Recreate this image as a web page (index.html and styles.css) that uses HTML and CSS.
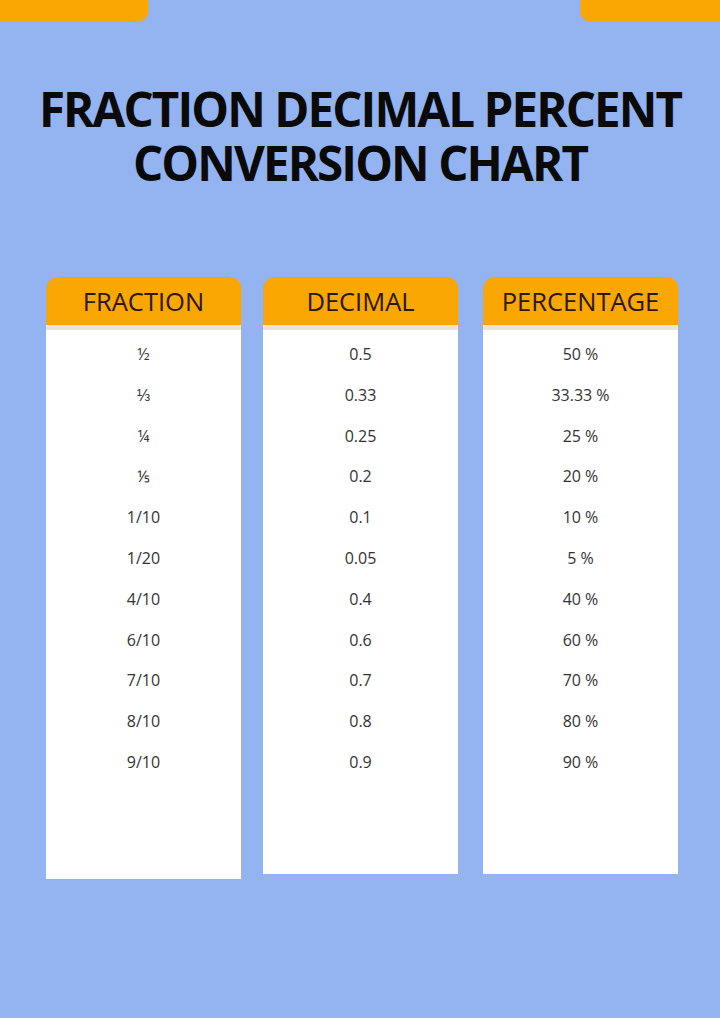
FILE: index.html
```html
<!DOCTYPE html>
<html>
<head>
<meta charset="utf-8">
<link rel="stylesheet" href="styles.css">
</head>
<body>
<div class="page">
  <div class="topbars">
    <div class="bar bar-left"></div>
    <div class="bar bar-right"></div>
  </div>
  <h1 class="title"><span class="line">FRACTION DECIMAL PERCENT</span><span class="line">CONVERSION CHART</span></h1>
  <div class="columns">
    <div class="col col1">
      <div class="head">FRACTION</div>
      <div class="body">
        <div class="row">½</div>
        <div class="row">⅓</div>
        <div class="row">¼</div>
        <div class="row">⅕</div>
        <div class="row">1/10</div>
        <div class="row">1/20</div>
        <div class="row">4/10</div>
        <div class="row">6/10</div>
        <div class="row">7/10</div>
        <div class="row">8/10</div>
        <div class="row">9/10</div>
      </div>
    </div>
    <div class="col col2">
      <div class="head">DECIMAL</div>
      <div class="body">
        <div class="row">0.5</div>
        <div class="row">0.33</div>
        <div class="row">0.25</div>
        <div class="row">0.2</div>
        <div class="row">0.1</div>
        <div class="row">0.05</div>
        <div class="row">0.4</div>
        <div class="row">0.6</div>
        <div class="row">0.7</div>
        <div class="row">0.8</div>
        <div class="row">0.9</div>
      </div>
    </div>
    <div class="col col3">
      <div class="head">PERCENTAGE</div>
      <div class="body">
        <div class="row">50 %</div>
        <div class="row">33.33 %</div>
        <div class="row">25 %</div>
        <div class="row">20 %</div>
        <div class="row">10 %</div>
        <div class="row">5 %</div>
        <div class="row">40 %</div>
        <div class="row">60 %</div>
        <div class="row">70 %</div>
        <div class="row">80 %</div>
        <div class="row">90 %</div>
      </div>
    </div>
  </div>
</div>
</body>
</html>
```
FILE: styles.css
```css
html, body {
  margin: 0;
  padding: 0;
}
body {
  background: #93b3f1;
  font-family: "Open Sans", "Liberation Sans", sans-serif;
}
.page {
  width: 720px;
  height: 1018px;
  overflow: hidden;
}
.topbars {
  display: flex;
  justify-content: space-between;
  height: 22px;
}
.bar {
  background: #faa603;
  height: 22px;
}
.bar-left {
  width: 148px;
  border-bottom-right-radius: 11px;
}
.bar-right {
  width: 140px;
  border-bottom-left-radius: 11px;
}
.title {
  margin: 60px 0 0 0;
  text-align: center;
  font-size: 47.5px;
  line-height: 54px;
  font-weight: 700;
  color: #0a0a0a;
  letter-spacing: -1.9px;
}
.line {
  display: block;
  white-space: nowrap;
}
.columns {
  display: flex;
  margin: 87px 0 0 46px;
  gap: 22px;
  align-items: flex-start;
}
.col {
  width: 195px;
}
.col3 {
  margin-left: 3px;
}
.head {
  height: 48px;
  background: #faa603;
  border-radius: 12px 12px 0 0;
  border-bottom: 5px solid #ebe3d3;
  text-align: center;
  font-size: 25.5px;
  line-height: 48px;
  color: #2a1808;
}
.body {
  background: #fff;
  height: 544px;
  padding-top: 4px;
  box-sizing: border-box;
}
.col1 .body {
  height: 549px;
}
.row {
  height: 40.8px;
  line-height: 40.8px;
  text-align: center;
  font-size: 16px;
  color: #333;
}
```
